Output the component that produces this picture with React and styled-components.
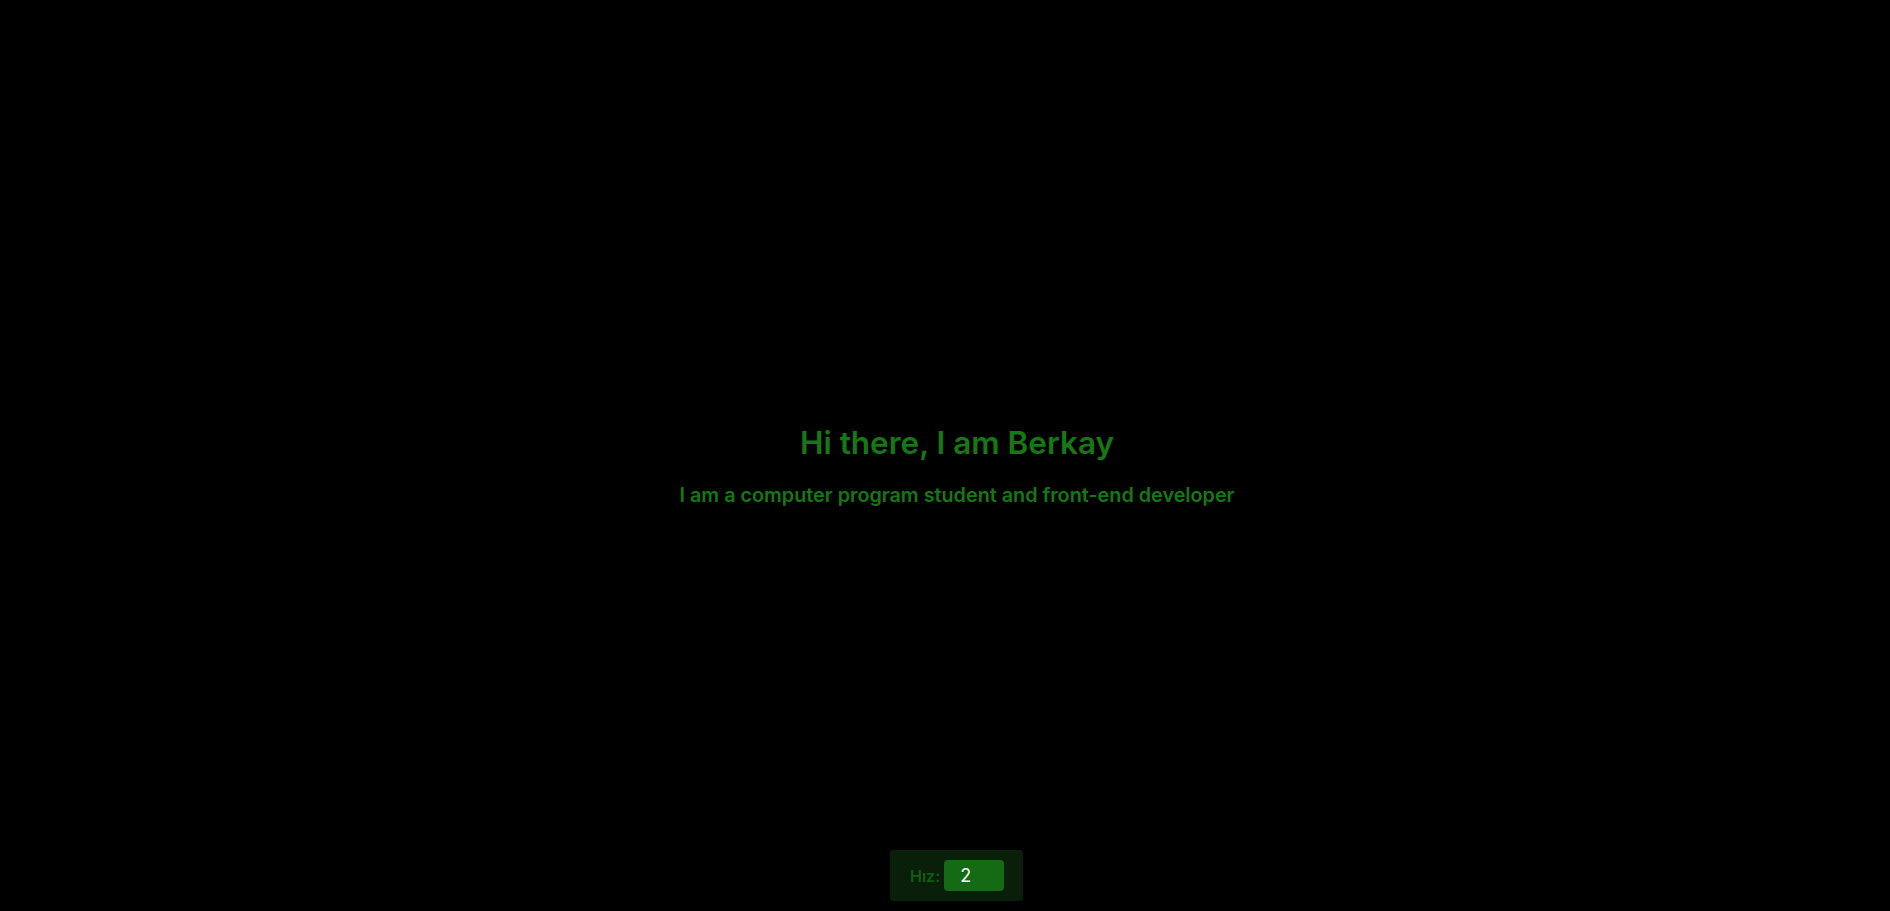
import React, { useState } from "react"
import styled, { createGlobalStyle } from "styled-components"

const GlobalStyle = createGlobalStyle`
  html, body {
    margin: 0;
    padding: 0;
    background: #000;
  }
  body {
    font-family: "Inter", "Noto Sans", sans-serif;
  }
`

const Page = styled.main`
  height: 100vh;
  box-sizing: border-box;
  padding-left: 24px;
  display: flex;
  flex-direction: column;
  align-items: center;
  justify-content: center;
  background: #000;
  overflow: hidden;
`

const Intro = styled.section`
  display: flex;
  flex-direction: column;
  align-items: center;
  margin-top: 20px;
`

const Title = styled.h1`
  margin: 0;
  font-size: 31.5px;
  font-weight: 600;
  line-height: 40px;
  color: #157815;
`

const Subtitle = styled.h3`
  margin: 19px 0 0;
  font-size: 19.8px;
  font-weight: 600;
  line-height: 26px;
  color: #157815;
`

const SpeedBar = styled.div`
  position: fixed;
  bottom: 10px;
  left: 890px;
  display: flex;
  align-items: center;
  gap: 4px;
  padding: 10px 19px 10px 20px;
  background: #0a1f0a;
  border-radius: 3px;
`

const Label = styled.label`
  font-size: 16px;
  font-weight: 600;
  color: #105e10;
`

const SpeedInput = styled.input`
  width: 60px;
  height: 31px;
  box-sizing: border-box;
  border: none;
  outline: none;
  border-radius: 4px;
  padding: 0 0 0 16px;
  background: #146b14;
  color: #fff;
  font-family: "Inter", sans-serif;
  font-size: 18px;
  appearance: textfield;
  &::-webkit-inner-spin-button,
  &::-webkit-outer-spin-button {
    -webkit-appearance: none;
    margin: 0;
  }
`

export default function App() {
  const [speed, setSpeed] = useState(2)
  return (
    <>
      <GlobalStyle />
      <Page>
        <Intro>
          <Title>Hi there, I am Berkay</Title>
          <Subtitle>I am a computer program student and front-end developer</Subtitle>
        </Intro>
        <SpeedBar>
          <Label htmlFor="speed">Hız:</Label>
          <SpeedInput
            id="speed"
            type="number"
            value={speed}
            onChange={e => setSpeed(e.target.value)}
          />
        </SpeedBar>
      </Page>
    </>
  )
}
